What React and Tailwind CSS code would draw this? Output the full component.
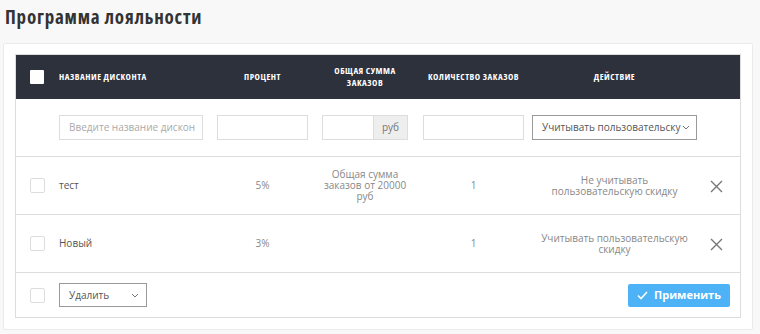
import React from "react";

const font = { fontFamily: '"Open Sans", "Liberation Sans", sans-serif' };

const Checkbox = ({ dark }) => (
  <div
    className={
      dark
        ? "w-[14px] h-[14px] bg-white rounded-[1px]"
        : "w-[15px] h-[15px] bg-white border border-[#ddd] rounded-[2px]"
    }
  />
);

const Chevron = () => (
  <svg width="8" height="5" viewBox="0 0 8 5" className="shrink-0">
    <path d="M1 1l3 3 3-3" fill="none" stroke="#777" strokeWidth="1" />
  </svg>
);

const CloseIcon = () => (
  <svg width="13" height="13" viewBox="0 0 13 13">
    <path d="M1 1l11 11M12 1L1 12" stroke="#777" strokeWidth="1.4" fill="none" />
  </svg>
);

const cols = "grid grid-cols-[43px_158px_105px_101px_109px_165px_1fr]";

const rows = [
  {
    name: "тест",
    percent: "5%",
    sum: "Общая сумма заказов от 20000 руб",
    count: "1",
    action: "Не учитывать пользовательскую скидку",
  },
  {
    name: "Новый",
    percent: "3%",
    sum: "",
    count: "1",
    action: "Учитывать пользовательскую скидку",
  },
];

export default function App() {
  return (
    <div className="min-h-screen bg-[#f8f8f8] px-[3px] pb-[5px]" style={font}>
      <h1 className="pl-[2px] pt-[5px] h-[43px] text-[19px] leading-[24px] font-bold text-[#333] tracking-[0.8px] [font-stretch:75%]">
        Программа лояльности
      </h1>

      <div className="bg-white border border-[#ebebeb] rounded-[2px] p-[11px] pt-[10px] w-[750px]">
        <div className="border border-[#ddd]">
          {/* header */}
          <div className={`${cols} h-[44px] bg-[#2c313c] items-center text-white text-[9px] font-bold leading-[12px] uppercase tracking-[0.5px] [font-stretch:75%]`}>
            <div className="pl-[14px]">
              <Checkbox dark />
            </div>
            <div>Название дисконта</div>
            <div className="w-[91px] text-center">Процент</div>
            <div className="w-[86px] text-center">
              Общая сумма
              <br />
              заказов
            </div>
            <div className="w-[101px] text-center">Количество заказов</div>
            <div className="w-[165px] text-center">Действие</div>
            <div />
          </div>

          {/* filters */}
          <div className={`${cols} h-[58px] items-center border-b border-[#ddd] text-[10px]`}>
            <div />
            <div className="w-[144px] h-[25px] border border-[#ddd] flex items-center px-[9px] text-[#aaa] overflow-hidden whitespace-nowrap">
              Введите название дискон
            </div>
            <div className="w-[91px] h-[25px] border border-[#ddd]" />
            <div className="w-[86px] h-[25px] flex">
              <div className="w-[51px] border border-[#ddd] border-r-0" />
              <div className="flex-1 border border-[#ddd] bg-[#eee] text-[#777] flex items-center justify-center">
                руб
              </div>
            </div>
            <div className="w-[101px] h-[25px] border border-[#ddd]" />
            <div className="w-[165px] h-[25px] border border-[#999] flex items-center pl-[9px] pr-[6px] text-[#555]">
              <span className="overflow-hidden whitespace-nowrap flex-1">Учитывать пользовательску</span>
              <Chevron />
            </div>
            <div />
          </div>

          {/* rows */}
          {rows.map((r) => (
            <div
              key={r.name}
              className={`${cols} h-[58px] items-center border-b border-[#ddd] text-[10px] leading-[11px] text-[#888]`}
            >
              <div className="pl-[14px]">
                <Checkbox />
              </div>
              <div className="text-[#555]">{r.name}</div>
              <div className="w-[91px] text-center">{r.percent}</div>
              <div className="w-[88px] -ml-[1px] text-center">{r.sum}</div>
              <div className="w-[101px] text-center">{r.count}</div>
              <div className="w-[165px] flex justify-center">
                <div className="w-[150px] text-center">{r.action}</div>
              </div>
              <div className="flex justify-center pr-[4px] pt-[1px]">
                <CloseIcon />
              </div>
            </div>
          ))}

          {/* footer */}
          <div className="h-[44px] flex items-center text-[10px]">
            <div className="w-[43px] pl-[14px]">
              <Checkbox />
            </div>
            <div className="w-[88px] h-[24px] border border-[#999] flex items-center justify-between pl-[9px] pr-[7px] text-[#555]">
              Удалить
              <Chevron />
            </div>
            <div className="flex-1" />
            <button className="w-[102px] h-[23px] mr-[10px] rounded-[2px] bg-[#4db3f6] text-white text-[11px] font-bold flex items-center justify-center gap-[6px]">
              <svg width="11" height="9" viewBox="0 0 11 9">
                <path d="M1 4.5l3 3L10 1" fill="none" stroke="white" strokeWidth="1.6" />
              </svg>
              Применить
            </button>
          </div>
        </div>
      </div>
    </div>
  );
}
